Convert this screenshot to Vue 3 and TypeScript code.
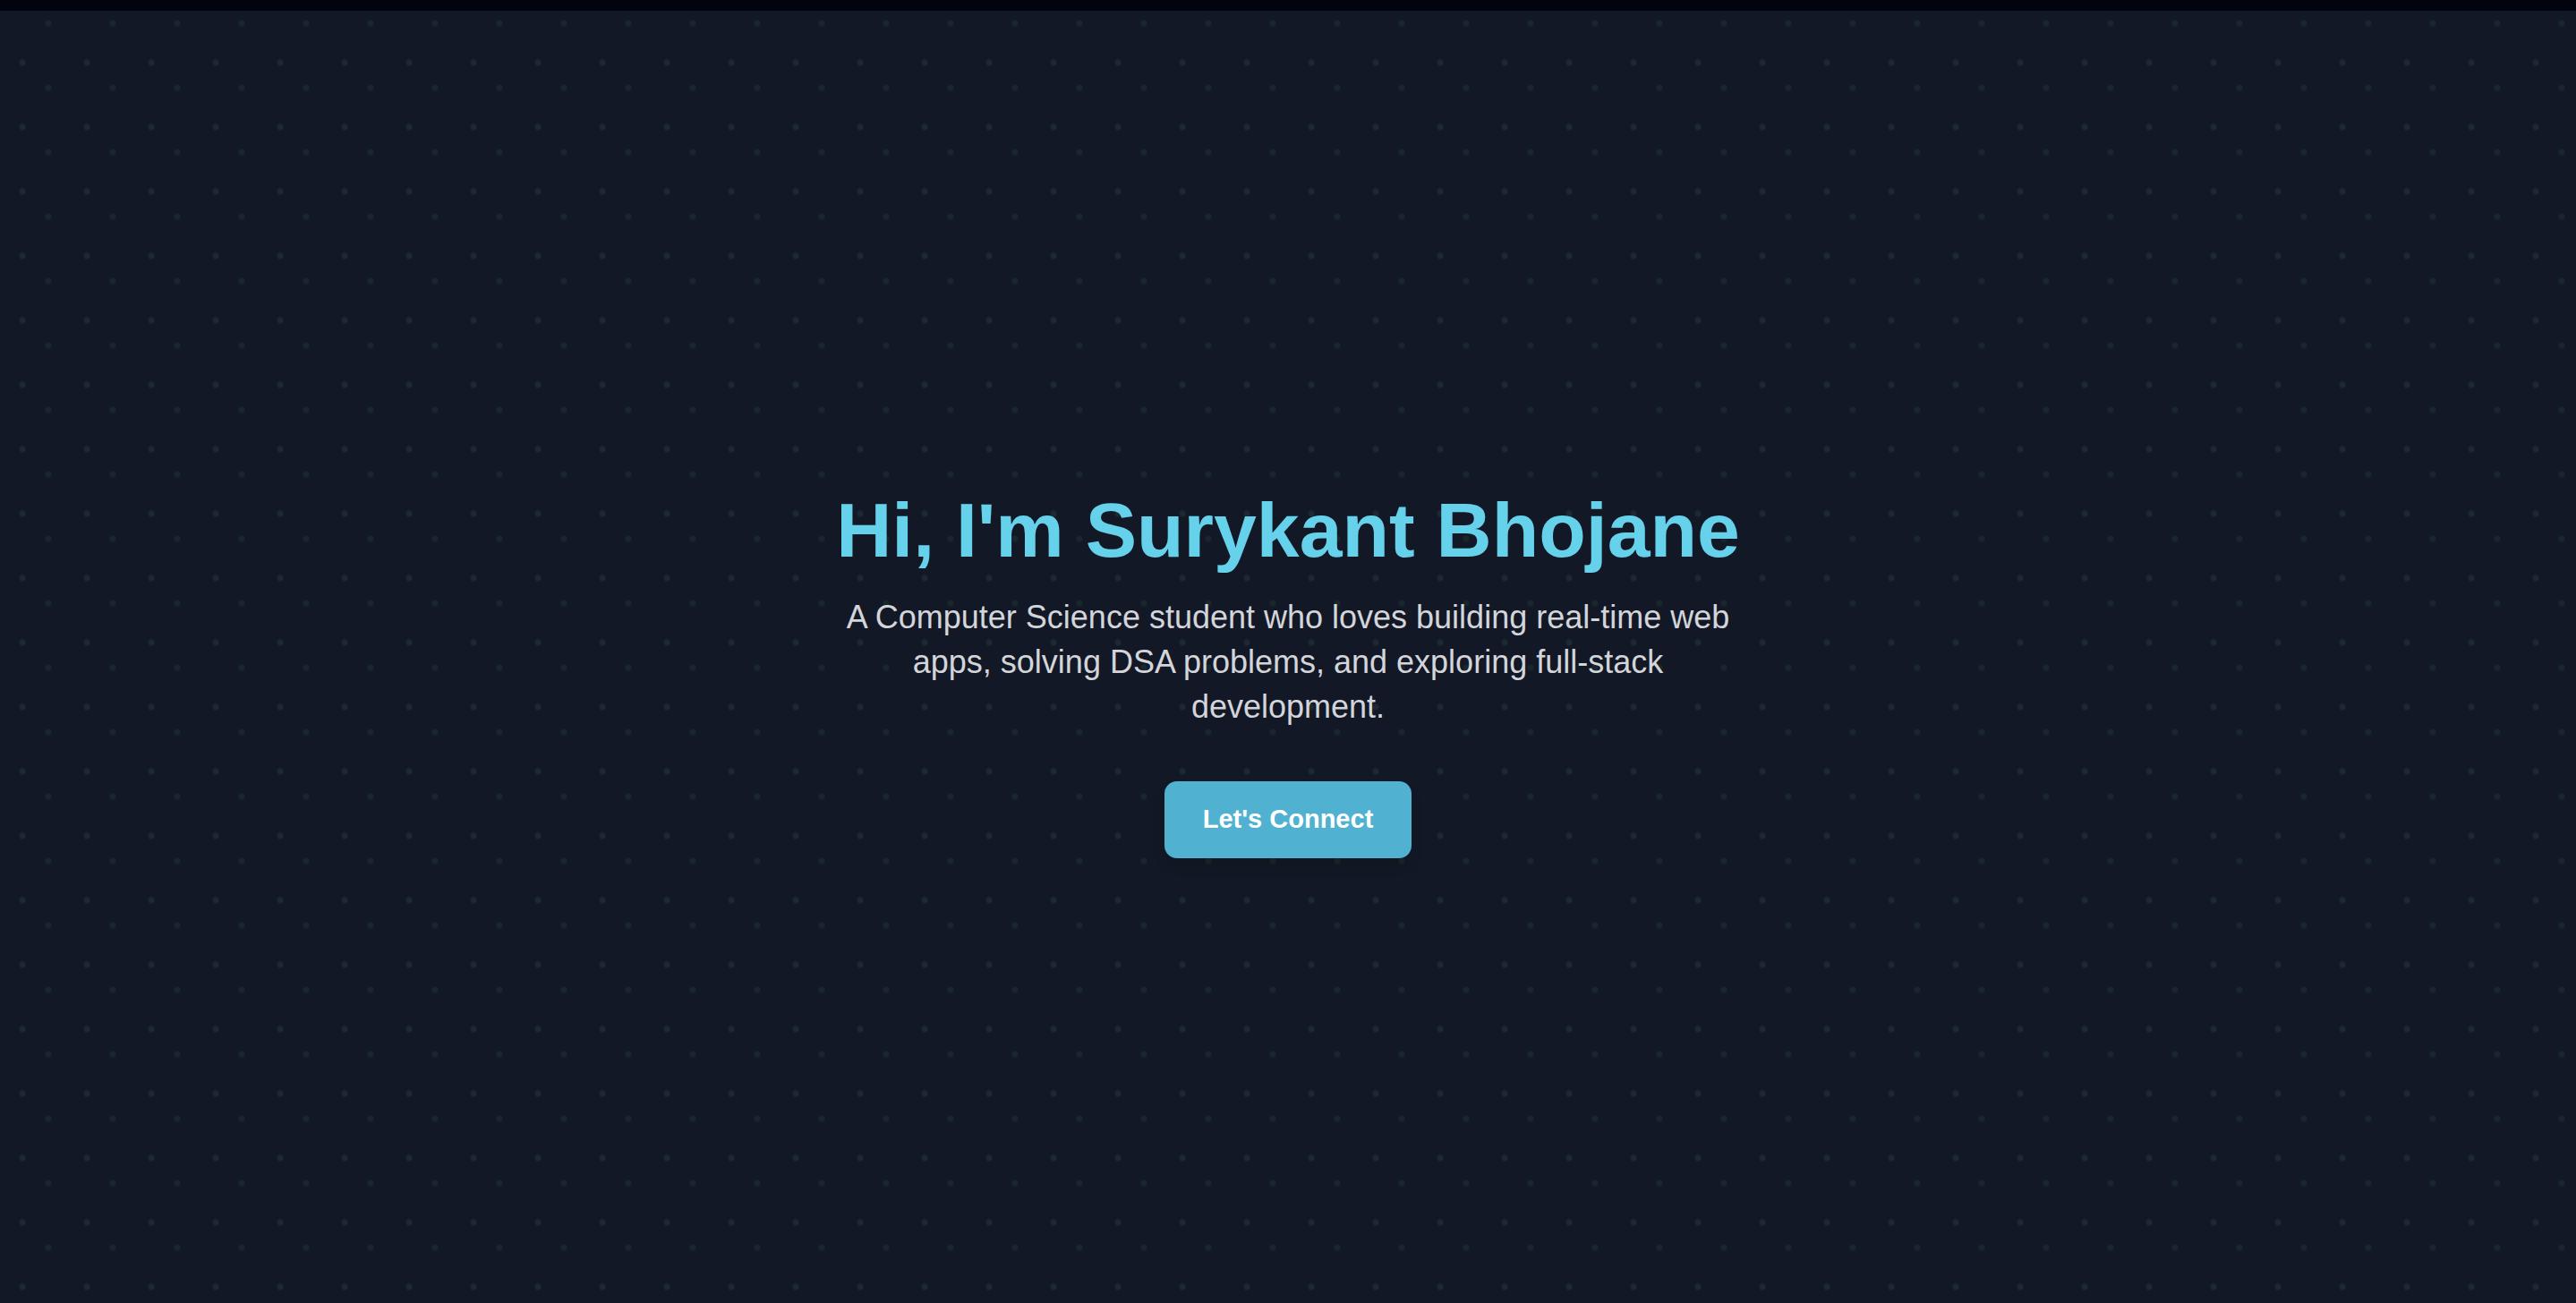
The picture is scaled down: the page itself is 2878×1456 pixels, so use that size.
<script setup lang="ts">
const hero = {
  title: "Hi, I'm Surykant Bhojane",
  intro:
    'A Computer Science student who loves building real-time web apps, solving DSA problems, and exploring full-stack development.',
  action: "Let's Connect",
}
</script>

<template>
  <div class="page">
    <header class="bar"></header>
    <main class="hero">
      <h1 class="title">{{ hero.title }}</h1>
      <p class="intro">{{ hero.intro }}</p>
      <a class="action" href="#contact">{{ hero.action }}</a>
    </main>
  </div>
</template>

<style>
body {
  margin: 0;
  background: #121825;
}
</style>

<style scoped>
.page {
  display: flex;
  flex-direction: column;
  min-height: 100vh;
  font-family: "Liberation Sans", Arial, Helvetica, sans-serif;
  background: #121825;
}

.bar {
  height: 12px;
  background: #02030f;
}

.hero {
  flex: 1;
  display: flex;
  flex-direction: column;
  align-items: center;
  justify-content: center;
  box-sizing: border-box;
  padding: 40px 24px 0;
  text-align: center;
  background-image:
    radial-gradient(circle at 25px 58px, #1a2a30 3px, transparent 4px),
    radial-gradient(circle at 54px 14px, #18272b 3px, transparent 4px);
  background-size: 72px 72px;
}

.title {
  margin: 0 0 30px;
  font-size: 86px;
  line-height: 86px;
  font-weight: 700;
  color: #65d1eb;
}

.intro {
  max-width: 1036px;
  margin: 0 0 58px;
  font-size: 36px;
  line-height: 50px;
  color: #d3d5da;
}

.action {
  padding: 0 43px 2px;
  border-radius: 14px;
  font-size: 29px;
  line-height: 84px;
  font-weight: 700;
  color: #fff;
  text-decoration: none;
  background: #51b1d0;
  box-shadow: 0 9px 14px rgba(0, 0, 0, 0.1);
}
</style>
